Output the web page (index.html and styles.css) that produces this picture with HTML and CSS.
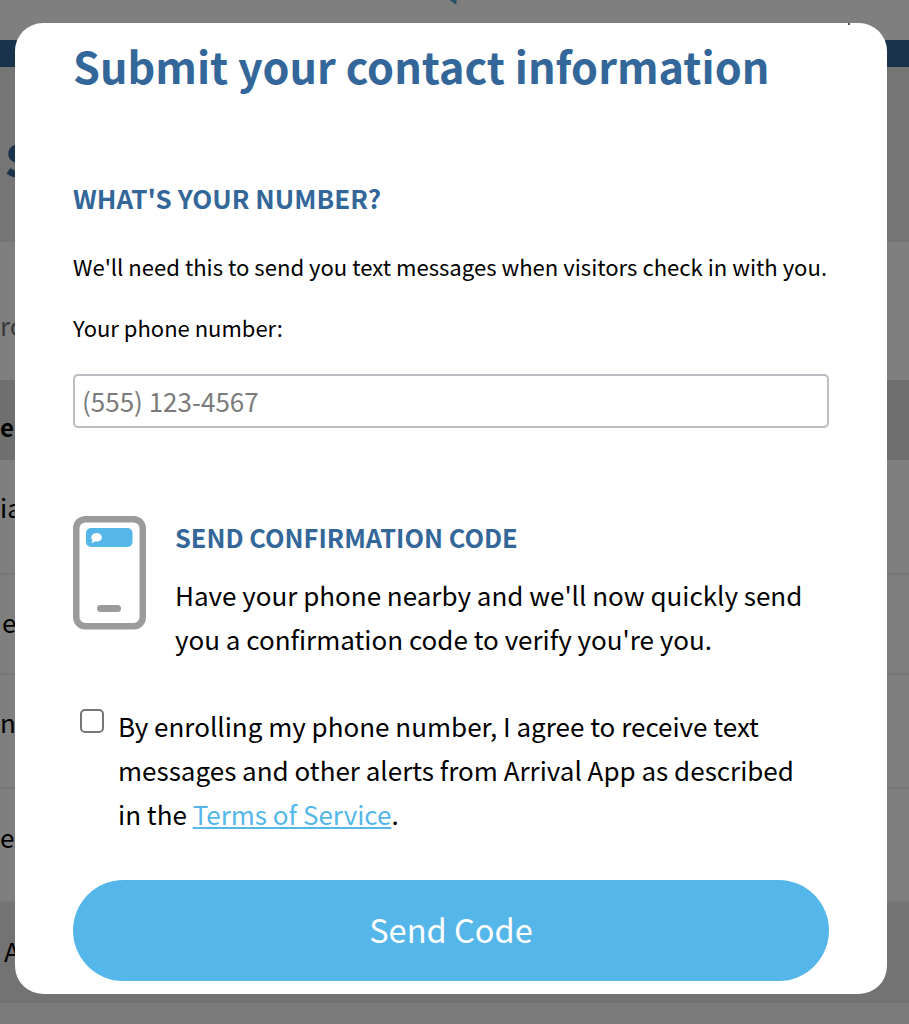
FILE: index.html
```html
<!DOCTYPE html>
<html lang="en">
<head>
<meta charset="utf-8">
<title>Submit your contact information</title>
<link rel="stylesheet" href="styles.css">
</head>
<body>
<div class="page">
  <div class="top"><span class="logo-tip"></span></div>
  <div class="navbar"></div>
  <div class="hero"><span class="hero-text">s</span></div>
  <div class="search"><span class="cell ro">ro</span></div>
  <div class="thead"><span class="cell th">e</span></div>
  <div class="row r1"><span class="cell ia">ia</span></div>
  <div class="row r2"><span class="cell e">e</span></div>
  <div class="row r3"><span class="cell ns">ns</span></div>
  <div class="row r4"><span class="cell ec">ec</span></div>
  <div class="foot"><span class="cell a">A</span></div>
  <div class="bottom"></div>
</div>
<div class="overlay"></div>
<div class="modal">
  <span class="close-tip"></span>
  <h1 class="title">Submit your contact information</h1>
  <h2 class="section">WHAT'S YOUR NUMBER?</h2>
  <p class="need">We'll need this to send you text messages when visitors check in with you.</p>
  <label class="phone-label" for="phone">Your phone number:</label>
  <input class="phone" id="phone" type="text" placeholder="(555) 123-4567">
  <div class="confirm">
    <svg class="phone-icon" width="73" height="114" viewBox="0 0 73 114">
      <rect x="3.250" y="3.250" width="66.500" height="107" rx="9" fill="#fff" stroke="#9b9b9b" stroke-width="6.500"/>
      <rect x="13" y="12" width="46.500" height="19" rx="5" fill="#54b6e9"/>
      <path d="M23.400 17a5.400 4.300 0 1 1-1.500 8.400l-3.400 1.800 1-3.100a5.400 4.300 0 0 1 3.900-7.100z" fill="#fff"/>
      <rect x="24" y="89" width="24" height="7" rx="3.500" fill="#9b9b9b"/>
    </svg>
    <div class="confirm-text">
      <h3 class="confirm-title">SEND CONFIRMATION CODE</h3>
      <p class="confirm-body">Have your phone nearby and we'll now quickly send you a confirmation code to verify you're you.</p>
    </div>
  </div>
  <div class="agree">
    <input class="check" type="checkbox" id="agree">
    <label class="agree-text" for="agree">By enrolling my phone number, I agree to receive text messages and other alerts from Arrival App as described in the <a href="#">Terms of Service</a>.</label>
  </div>
  <button class="send" type="button">Send Code</button>
</div>
</body>
</html>
```
FILE: styles.css
```css
* { box-sizing: border-box; }
html, body { margin: 0; height: 1024px; overflow: hidden; }
body { font-family: "Noto Sans CJK SC", "Noto Sans", sans-serif; background: #fff; color: #000; position: relative; }
.page { width: 909px; }
.cell { display: block; color: #000; font-size: 26px; line-height: 32px; white-space: nowrap; }
.top { height: 40px; background: #fff; display: flex; justify-content: center; }
.logo-tip { width: 7px; height: 5px; background: #4aa3d0; clip-path: polygon(0 0, 100% 0, 100% 100%); margin-left: -3px; }
.navbar { height: 27px; background: #336699; }
.hero { height: 175px; background: #ebebeb; overflow: hidden; }
.hero-text { display: block; font-size: 58px; font-weight: 700; color: #336699; line-height: 70px; padding: 50px 0 0 5px; }
.search { height: 138px; background: #fff; padding-top: 67px; }
.ro { color: #777; }
.thead { height: 80px; background: #dedede; padding-top: 31px; }
.th { font-weight: 700; font-size: 24px; }
.row { border-bottom: 2px solid #eee; background: #fff; padding-top: 31px; }
.r1 { height: 115px; }
.r2 { height: 100px; }
.r3 { height: 114px; }
.r4 { height: 114px; padding-top: 32px; }
.e { margin-left: 2px; }
.foot { height: 100px; background: #e6e6e6; padding-top: 32px; }
.a { margin-left: 4px; }
.bottom { height: 21px; background: #f6f6f6; }
.overlay { position: absolute; inset: 0; background: rgba(0,0,0,.5); }
.modal { position: absolute; left: 15px; top: 23px; width: 872px; height: 971px; background: #fff; border-radius: 28px; padding: 0 58px; overflow: hidden; }
.close-tip { position: absolute; left: 833px; top: 0; width: 2px; height: 2px; background: #555; }
.title { margin: 12px 0 0; font-size: 43.200px; line-height: 60px; font-weight: 700; color: #336699; white-space: nowrap; }
.section { margin: 85px 0 0; font-size: 26px; line-height: 36px; font-weight: 700; color: #336699; }
.need { margin: 34px 0 0; font-size: 22.100px; line-height: 32px; white-space: nowrap; }
.phone-label { display: block; margin-top: 29px; font-size: 22px; line-height: 32px; }
.phone { display: block; width: 756px; height: 54px; margin-top: 31px; border: 2px solid #b9bcc0; border-radius: 5px; padding: 0 7px 2px; font: inherit; font-size: 26px; }
.phone::placeholder { color: #7b7b7b; }
.confirm { display: flex; gap: 29px; margin-top: 88px; }
.phone-icon { flex: none; }
.confirm-title { margin: 3px 0 0; font-size: 25.400px; line-height: 36px; font-weight: 700; color: #336699; }
.confirm-body { margin: 18px 0 0; font-size: 26px; line-height: 44px; }
.agree { display: flex; margin-top: 43px; padding-left: 7px; padding-right: 24px; }
.check { appearance: none; width: 24px; height: 24px; margin: 5px 14px 0 0; flex: none; border: 2px solid #767676; border-radius: 5px; background: #fff; }
.agree-text { font-size: 26px; line-height: 44px; }
.agree-text a { color: #54b6e9; }
.send { display: block; width: 756px; height: 101px; margin-top: 44px; padding: 0 0 4px; border: 0; border-radius: 51px; background: #54b6e9; color: #fff; font: inherit; font-size: 32.600px; }
```
